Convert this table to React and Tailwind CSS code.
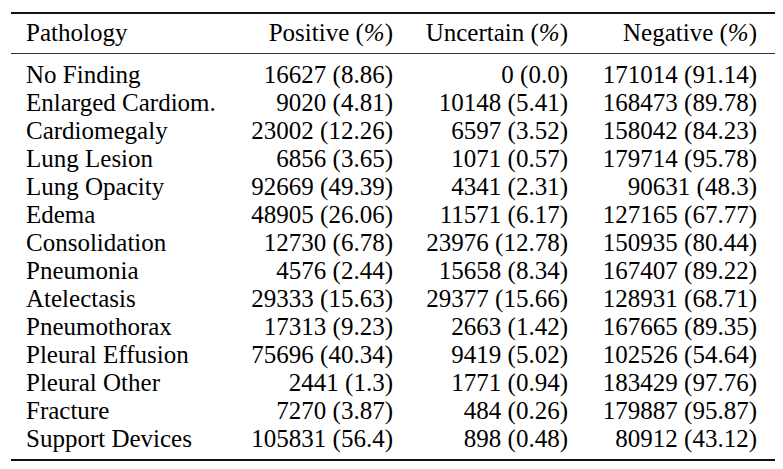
import React from 'react';

const rows = [
  ['No Finding', '16627 (8.86)', '0 (0.0)', '171014 (91.14)'],
  ['Enlarged Cardiom.', '9020 (4.81)', '10148 (5.41)', '168473 (89.78)'],
  ['Cardiomegaly', '23002 (12.26)', '6597 (3.52)', '158042 (84.23)'],
  ['Lung Lesion', '6856 (3.65)', '1071 (0.57)', '179714 (95.78)'],
  ['Lung Opacity', '92669 (49.39)', '4341 (2.31)', '90631 (48.3)'],
  ['Edema', '48905 (26.06)', '11571 (6.17)', '127165 (67.77)'],
  ['Consolidation', '12730 (6.78)', '23976 (12.78)', '150935 (80.44)'],
  ['Pneumonia', '4576 (2.44)', '15658 (8.34)', '167407 (89.22)'],
  ['Atelectasis', '29333 (15.63)', '29377 (15.66)', '128931 (68.71)'],
  ['Pneumothorax', '17313 (9.23)', '2663 (1.42)', '167665 (89.35)'],
  ['Pleural Effusion', '75696 (40.34)', '9419 (5.02)', '102526 (54.64)'],
  ['Pleural Other', '2441 (1.3)', '1771 (0.94)', '183429 (97.76)'],
  ['Fracture', '7270 (3.87)', '484 (0.26)', '179887 (95.87)'],
  ['Support Devices', '105831 (56.4)', '898 (0.48)', '80912 (43.12)'],
];

const cols = 'grid grid-cols-[217px_150px_175px_189px] pl-[15px]';

export default function App() {
  return (
    <div className="w-[783px] h-[469px] bg-white pt-[12px] text-black text-[25px] leading-none font-['Liberation_Serif']">
      <div className="ml-[11px] w-[764px]">
        <div className="h-[2px] bg-[#111]" />
        <div className={`${cols} h-[39px] pb-[2px] items-center`}>
          <div>Pathology</div>
          <div className="text-right">Positive (<i>%</i>)</div>
          <div className="text-right">Uncertain (<i>%</i>)</div>
          <div className="text-right">Negative (<i>%</i>)</div>
        </div>
        <div className="h-px bg-[#333]" />
        <div className="pt-[6px]">
          {rows.map((r, i) => (
            <div key={i} className={`${cols} h-[28px] items-center`}>
              <div className="whitespace-nowrap">{r[0]}</div>
              <div className="text-right whitespace-nowrap">{r[1]}</div>
              <div className="text-right whitespace-nowrap">{r[2]}</div>
              <div className="text-right whitespace-nowrap">{r[3]}</div>
            </div>
          ))}
        </div>
        <div className="mt-[7px] h-[2px] bg-[#111]" />
      </div>
    </div>
  );
}
